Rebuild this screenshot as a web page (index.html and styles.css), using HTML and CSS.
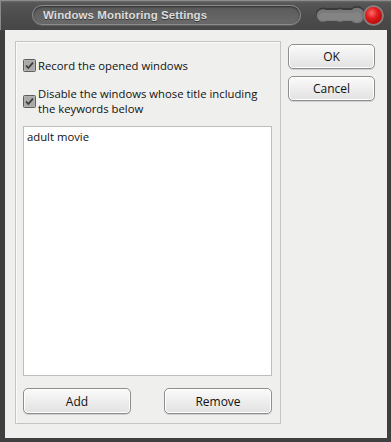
FILE: index.html
```html
<!DOCTYPE html>
<html>
<head>
<meta charset="utf-8">
<link rel="stylesheet" href="styles.css">
</head>
<body>
<div class="window">
  <div class="titlebar">
    <div class="title-pill"><span class="title-text">Windows Monitoring Settings</span></div>
    <div class="controls">
      <svg class="groove" width="52" height="24" viewBox="0 0 52 24">
        <g fill="#3a3a3a">
          <circle cx="8" cy="11.5" r="7"/>
          <rect x="8" y="5" width="36" height="12"/>
          <circle cx="25" cy="11.5" r="7"/>
          <circle cx="42" cy="11.5" r="8.5"/>
        </g>
        <g fill="#7a7a7a">
          <circle cx="8" cy="12.5" r="6.3"/>
          <rect x="8" y="7" width="36" height="11"/>
          <circle cx="25" cy="12.5" r="6.3"/>
          <circle cx="42" cy="12.5" r="7.8"/>
        </g>
        <g fill="#848484">
          <circle cx="8" cy="14" r="4"/>
          <rect x="8" y="10" width="34" height="7"/>
          <circle cx="25" cy="14" r="4"/>
          <circle cx="42" cy="14" r="5"/>
        </g>
      </svg>
      <div class="close-dot"></div>
    </div>
  </div>
  <div class="client">
    <div class="panel">
      <label class="check-row one">
        <span class="check"><svg width="13" height="13" viewBox="0 0 13 13"><rect x="0.5" y="0.5" width="12" height="12" rx="1" fill="#b9b9b9" stroke="#5f5f5f"/><rect x="1.5" y="1.5" width="10" height="10" fill="#a9a9a9"/><path d="M3 6.5 L5.3 9 L10 3.6" fill="none" stroke="#3d3d3d" stroke-width="1.8"/></svg></span>
        <span class="label">Record the opened windows</span>
      </label>
      <label class="check-row two">
        <span class="check"><svg width="13" height="13" viewBox="0 0 13 13"><rect x="0.5" y="0.5" width="12" height="12" rx="1" fill="#b9b9b9" stroke="#5f5f5f"/><rect x="1.5" y="1.5" width="10" height="10" fill="#a9a9a9"/><path d="M3 6.5 L5.3 9 L10 3.6" fill="none" stroke="#3d3d3d" stroke-width="1.8"/></svg></span>
        <span class="label">Disable the windows whose title including<br>the keywords below</span>
      </label>
      <div class="listbox">
        <div class="item">adult movie</div>
      </div>
      <div class="bottom-buttons">
        <button class="btn wide">Add</button>
        <button class="btn wide">Remove</button>
      </div>
    </div>
    <div class="side">
      <button class="btn side-btn">OK</button>
      <button class="btn side-btn">Cancel</button>
    </div>
  </div>
</div>
</body>
</html>
```
FILE: styles.css
```css
html, body {
  margin: 0;
  padding: 0;
  background: #ffffff;
}
.window {
  width: 391px;
  height: 442px;
  box-sizing: border-box;
  background: #3f3f3f;
  font-family: "Open Sans", "DejaVu Sans", sans-serif;
  display: flex;
  flex-direction: column;
}
.titlebar {
  height: 30px;
  flex: none;
  box-sizing: border-box;
  display: flex;
  align-items: flex-start;
  padding-left: 31px;
  background: linear-gradient(#6a6a6a 0px, #565656 2px, #4c4c4c 15px, #464646 30px);
  border-top: 1px solid #8d8d8d;
  border-left: 1px solid #8a8a8a;
}
.title-pill {
  margin-top: 4px;
  width: 269px;
  height: 20px;
  box-sizing: border-box;
  border-radius: 10px;
  border: 1px solid #8c8c8c;
  box-shadow: inset 0 1px 2px #2e2e2e, 0 1px 0 #5e5e5e;
  background: linear-gradient(#5a5a5a, #6a6a6a);
  display: flex;
  align-items: center;
  padding-left: 10px;
}
.title-text {
  color: #dcdcdc;
  font-family: "Liberation Sans", Arial, sans-serif;
  font-weight: bold;
  font-size: 11.5px;
  letter-spacing: 0.1px;
  text-shadow: 0 1px 0 #3a3a3a;
}
.controls {
  margin-left: 14px;
  margin-top: 2px;
  display: flex;
  align-items: center;
  height: 24px;
}
.groove {
  display: block;
}
.close-dot {
  width: 17px;
  height: 17px;
  margin-left: -4px;
  border-radius: 50%;
  background: radial-gradient(circle at 40% 35%, #ff7070 0%, #e42020 35%, #b00000 85%);
  border: 2px solid #8a7c7c;
  box-shadow: 0 0 1px #222;
}
.client {
  flex: 1;
  margin: 0 4px 4px 5px;
  background: #efefed;
  display: flex;
  align-items: flex-start;
  padding: 11px 0 0 10px;
  box-sizing: border-box;
}
.panel {
  width: 266px;
  height: 383px;
  box-sizing: border-box;
  border: 1px solid #c4c4c2;
  box-shadow: inset 1px 1px 0 #fbfbfa;
  padding: 0 8px 0 7px;
  display: flex;
  flex-direction: column;
}
.check-row {
  display: flex;
  align-items: center;
  font-size: 11.3px;
  color: #111;
  line-height: 15px;
}
.check-row.one {
  margin-top: 16px;
}
.check-row.two {
  margin-top: 13px;
}
.check {
  width: 13px;
  height: 13px;
  flex: none;
  display: block;
  margin-right: 2px;
}
.check svg {
  display: block;
}
.listbox {
  margin-top: 10px;
  width: 249px;
  height: 250px;
  box-sizing: border-box;
  background: #ffffff;
  border: 1px solid #bdbdbb;
  padding: 2px 3px;
}
.item {
  font-size: 11.3px;
  color: #111;
  line-height: 15px;
}
.bottom-buttons {
  margin-top: 12px;
  display: flex;
  justify-content: space-between;
  width: 249px;
}
.btn {
  box-sizing: border-box;
  border: 1px solid #8e8e8e;
  border-radius: 5px;
  background: linear-gradient(#fbfbfb 0%, #efefef 45%, #e2e2e2 100%);
  box-shadow: inset 0 0 0 1px #ffffff, 0 1px 0 #d0d0d0;
  font-family: "Open Sans", "DejaVu Sans", sans-serif;
  font-size: 12px;
  color: #111;
  padding: 0;
  margin: 0;
}
.btn.wide {
  width: 108px;
  height: 26px;
}
.side {
  margin-left: 7px;
  margin-top: 3px;
  display: flex;
  flex-direction: column;
  gap: 7px;
}
.side-btn {
  width: 87px;
  height: 25px;
}
```
